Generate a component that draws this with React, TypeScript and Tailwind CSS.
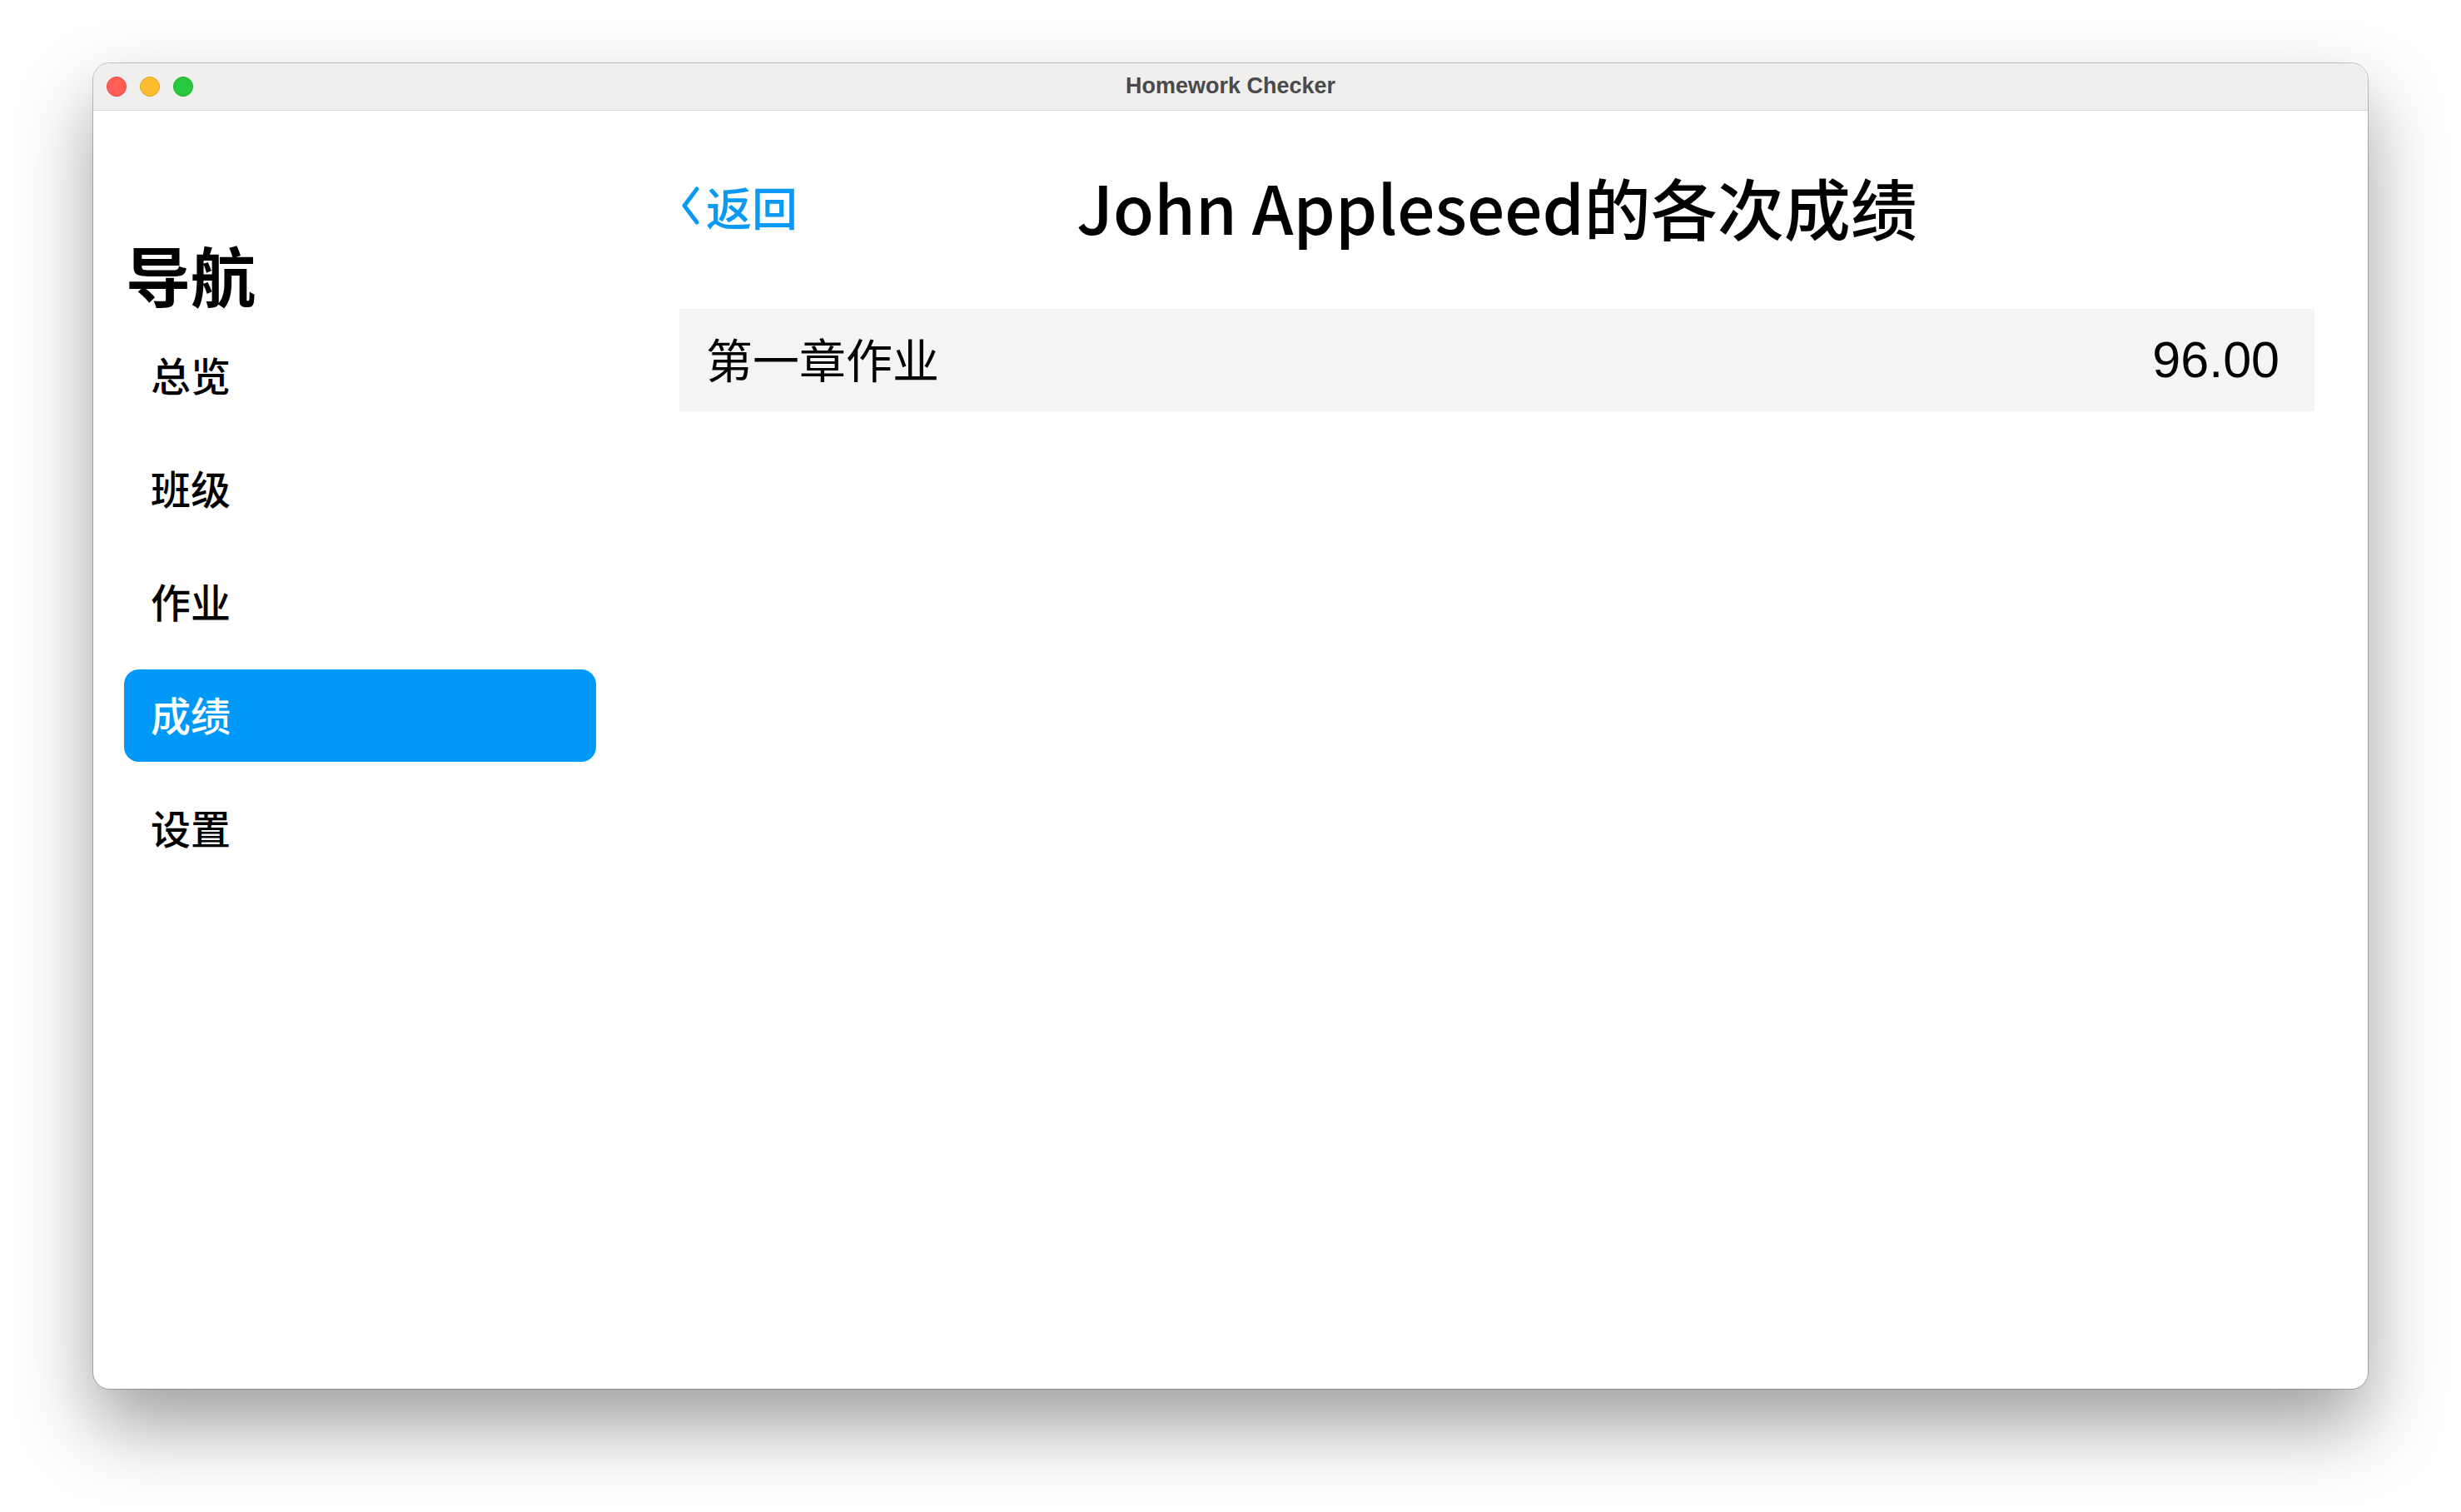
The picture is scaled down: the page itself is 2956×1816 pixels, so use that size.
import React from "react";

const cjk = "font-['Noto_Sans_CJK_SC','Noto_Sans',sans-serif]";

function NavItem({ label, active }: { label: string; active?: boolean }) {
  return (
    <div
      className={`flex h-[111px] items-center rounded-[18px] pl-[32px] pb-[6px] text-[48px] font-medium leading-none ${cjk} ${
        active ? "bg-[#0099f7] text-white" : "text-black"
      }`}
    >
      {label}
    </div>
  );
}

export default function App() {
  return (
    <div className="w-[2956px] h-[1816px] bg-white px-[112px] pt-[76px]">
      <div className="flex h-[1592px] flex-col overflow-hidden rounded-[20px] bg-white shadow-[0_44px_90px_rgba(0,0,0,0.38),0_0_0_1px_rgba(0,0,0,0.22)]">
        {/* Title bar */}
        <div className="relative flex h-[57px] shrink-0 items-center justify-center border-b border-[#d8d7d6] bg-[#f0efee]">
          <div className="absolute left-[16px] top-[16px] flex gap-[16px]">
            <div className="h-[24px] w-[24px] rounded-full border border-[#e2463f] bg-[#ff5f57]" />
            <div className="h-[24px] w-[24px] rounded-full border border-[#e1a325] bg-[#febc2e]" />
            <div className="h-[24px] w-[24px] rounded-full border border-[#1aab29] bg-[#28c840]" />
          </div>
          <span className="pb-[2px] font-['Liberation_Sans',Arial,sans-serif] text-[27px] font-bold text-[#4a4a4a]">
            Homework Checker
          </span>
        </div>

        {/* Body */}
        <div className="flex flex-1">
          {/* Sidebar */}
          <div className="flex w-[641px] flex-col px-[37px]">
            <div className={`mt-[157px] pl-[2px] text-[78px] font-bold leading-none text-black ${cjk}`}>
              导航
            </div>
            <div className="mt-[28px] flex flex-col gap-[25px]">
              <NavItem label="总览" />
              <NavItem label="班级" />
              <NavItem label="作业" />
              <NavItem label="成绩" active />
              <NavItem label="设置" />
            </div>
          </div>

          {/* Content */}
          <div className="flex flex-1 flex-col pl-[63px] pr-[64px]">
            <div className="mt-[54px] grid h-[120px] grid-cols-[1fr_auto_1fr] items-center">
              <div className={`flex items-center gap-[7px] text-[#0a9af5] ${cjk}`}>
                <svg width="24" height="46" viewBox="0 0 24 46" className="ml-[1px]">
                  <path d="M20 3 L5 23 L20 43" fill="none" stroke="#0a9af5" strokeWidth="5" strokeLinecap="round" strokeLinejoin="round" />
                </svg>
                <span className="text-[55px] font-medium leading-none">返回</span>
              </div>
              <div className={`text-[80px] font-medium leading-none text-black ${cjk}`}>
                John Appleseed的各次成绩
              </div>
              <div />
            </div>
            <div className="mt-[64px] flex h-[123px] items-center justify-between bg-[#f4f4f4] pl-[32px] pr-[42px]">
              <span className={`pb-[6px] text-[56px] leading-none text-black ${cjk}`}>第一章作业</span>
              <span className="font-['Liberation_Sans',Arial,sans-serif] text-[61px] leading-none text-black">
                96.00
              </span>
            </div>
          </div>
        </div>
      </div>
    </div>
  );
}
